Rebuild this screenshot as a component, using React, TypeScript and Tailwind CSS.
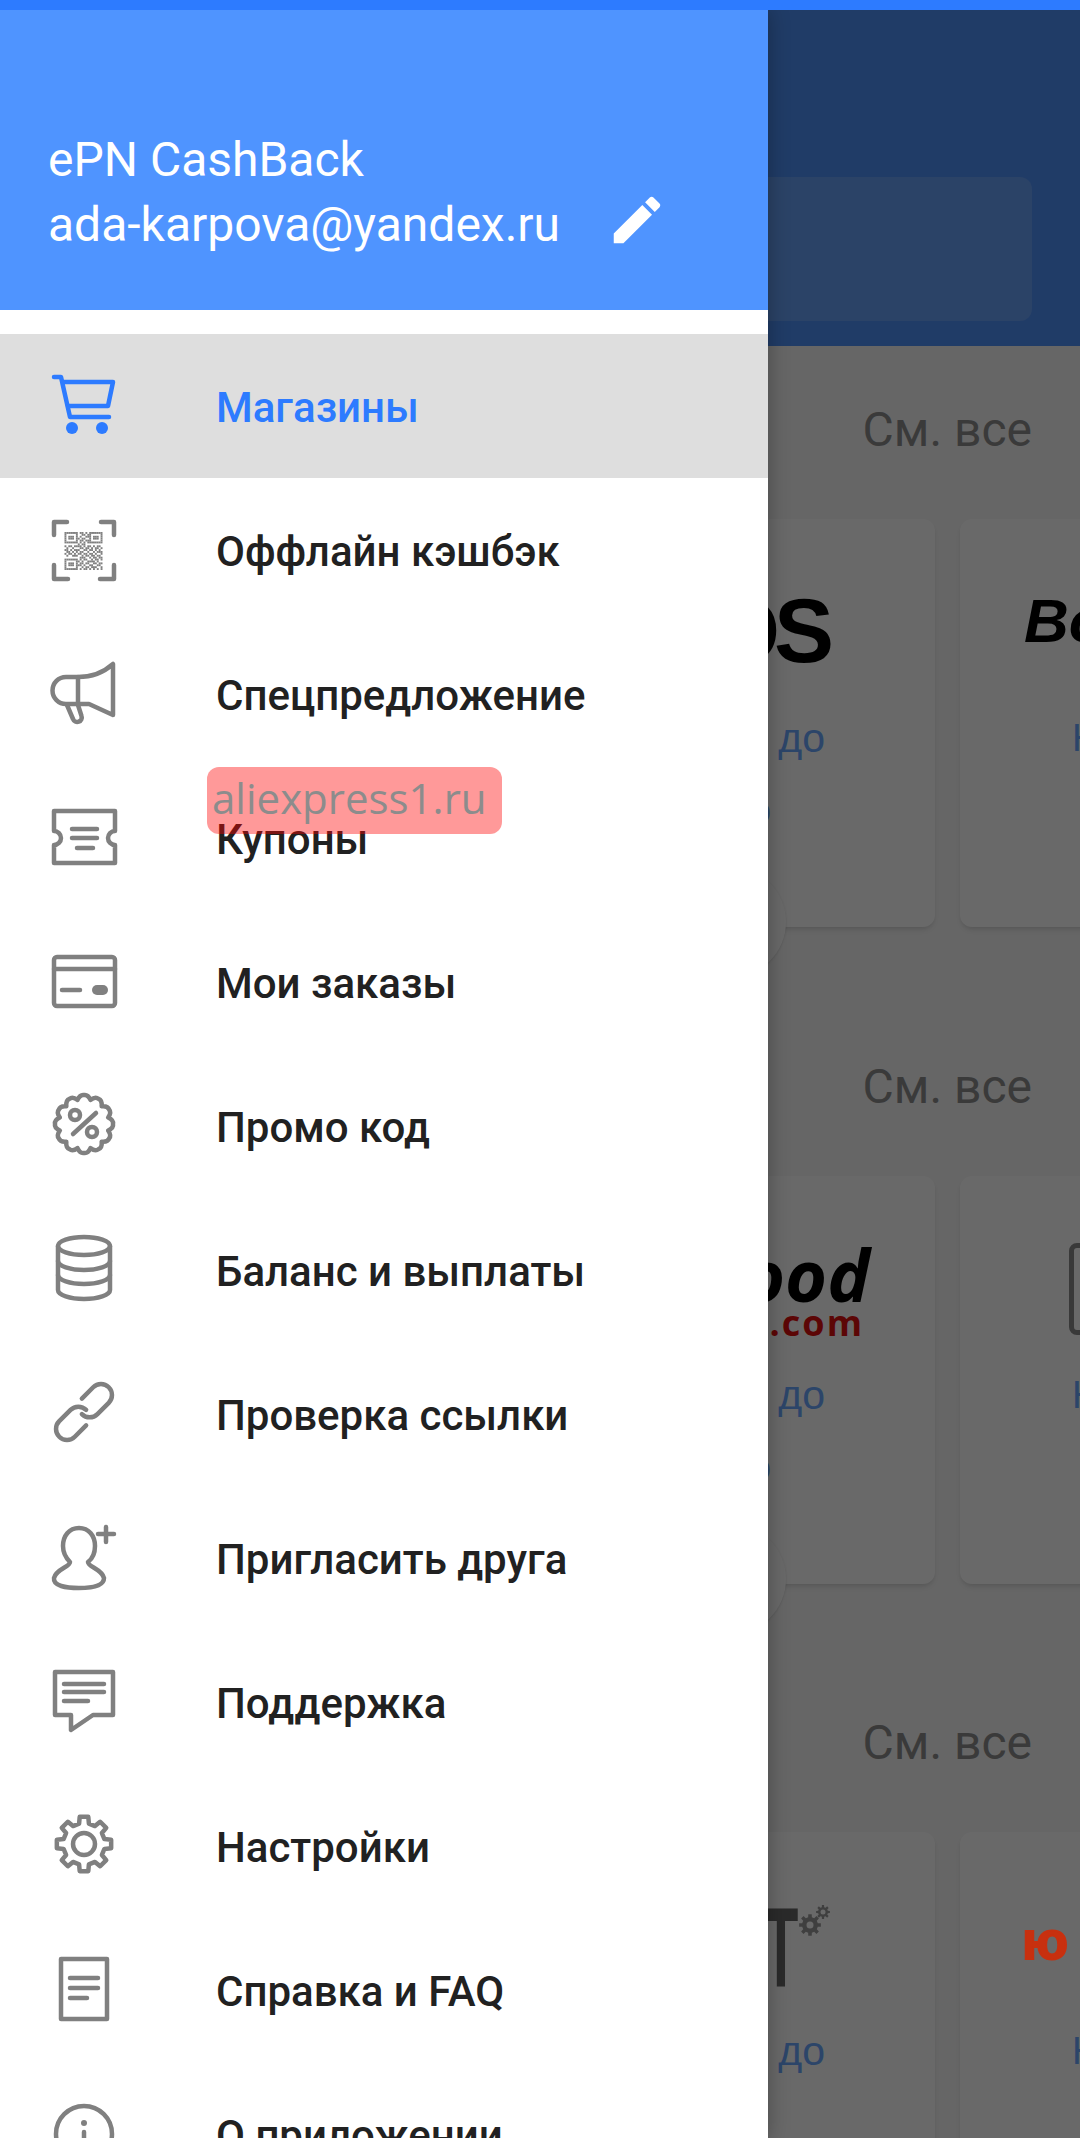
const MENU_GRAY = '#808080';

function badgePath(cx: number, cy: number, outer: number, inner: number, teeth: number) {
  // scalloped outline for the promo badge
  const pts: string[] = [];
  const step = (Math.PI * 2) / teeth;
  for (let i = 0; i < teeth; i++) {
    const a = i * step - Math.PI / 2;
    const b = a + step / 2;
    const c = a + step;
    const ctrl = (ang: number, r: number) => `${(cx + Math.cos(ang) * r).toFixed(2)} ${(cy + Math.sin(ang) * r).toFixed(2)}`;
    if (i === 0) pts.push(`M${ctrl(a, outer)}`);
    pts.push(`Q${ctrl(a + step * 0.25, outer + 1)} ${ctrl(b, inner)}`);
    pts.push(`Q${ctrl(b + step * 0.25, outer + 1)} ${ctrl(c, outer)}`);
  }
  return pts.join(' ') + 'Z';
}

function gearPath(cx: number, cy: number, outer: number, inner: number, teeth: number) {
  const pts: string[] = [];
  const step = (Math.PI * 2) / teeth;
  const at = (ang: number, r: number) => `${(cx + Math.cos(ang) * r).toFixed(2)} ${(cy + Math.sin(ang) * r).toFixed(2)}`;
  for (let i = 0; i < teeth; i++) {
    const a = i * step - Math.PI / 2;
    pts.push(`${i === 0 ? 'M' : 'L'}${at(a - step * 0.2, outer)}`);
    pts.push(`L${at(a + step * 0.2, outer)}`);
    pts.push(`L${at(a + step * 0.3, inner)}`);
    pts.push(`L${at(a + step * 0.7, inner)}`);
  }
  return pts.join(' ') + 'Z';
}

const QR = [
  '1111111011010 1111111',
  '1000001001101 1000001',
  '1011101010011 1011101',
  '1011101101100 1011101',
  '1000001011011 1000001',
  '1111111010101 1111111',
  '0000000101100 0000000',
  '1011011110101 1010110',
  '0100100011011 0101101',
  '1101011100110 1101010',
  '0110101011001 0010111',
  '1011010110110 1101001',
  '0100111001011 0110110',
  '0000000011100 1011011',
  '1111111010110 0101101',
  '1000001101001 1110100',
  '1011101011011 0011011',
  '1011101110100 1100110',
  '1000001001011 0111001',
  '1111111010110 1010101',
].map((r) => r.replace(' ', ''));

function Ic({ children, stroke = MENU_GRAY, sw = 4.5 }: { children: React.ReactNode; stroke?: string; sw?: number }) {
  return (
    <svg viewBox="0 0 64 64" className="w-16 h-16 flex-none overflow-visible" fill="none" stroke={stroke} strokeWidth={sw} strokeLinecap="round" strokeLinejoin="round">
      {children}
    </svg>
  );
}

const icons = {
  cart: (
    <Ic stroke="#2d7bff" sw={4.5}>
      <path d="M2 3h7l9 40h39" />
      <path d="M11 8h50l-5 24H16" />
      <circle cx="20" cy="54" r="6" fill="#2d7bff" stroke="none" />
      <circle cx="50" cy="54" r="6" fill="#2d7bff" stroke="none" />
    </Ic>
  ),
  qr: (
    <Ic sw={4.5}>
      <path d="M15 4H2v13M49 4h13v13M2 47v14h14M62 47v14H48" />
      <g fill={MENU_GRAY} stroke="none">
        {QR.flatMap((row, y) =>
          row.split('').map((c, x) => (c === '1' ? <rect key={`${x}-${y}`} x={12.5 + x * 1.9} y={14 + y * 1.9} width="1.9" height="1.9" /> : null)),
        )}
      </g>
    </Ic>
  ),
  megaphone: (
    <Ic>
      <path d="M61 2v51L37 42H14a13.5 13.5 0 0 1 0-27h12C40 15 51 11 61 2Z" />
      <path d="M26 15v27" />
      <path d="M15 43l6 14a4.5 4.5 0 0 0 8.5-3L26 43" />
    </Ic>
  ),
  ticket: (
    <Ic>
      <path d="M2 5h61v20a7 7 0 0 0 0 14v18H2V39a7 7 0 0 0 0-14Z" />
      <path d="M20 23h25M20 32h25M25 42h16" strokeWidth="4.5" />
    </Ic>
  ),
  card: (
    <Ic>
      <rect x="2" y="7" width="61" height="49" rx="3" />
      <path d="M2 19h61" />
      <path d="M10 40h18" />
      <rect x="40" y="35" width="16" height="10" rx="5" fill={MENU_GRAY} stroke="none" />
    </Ic>
  ),
  promo: (
    <Ic>
      <path d={badgePath(32, 30, 29, 25, 12)} />
      <path d="M21 40l23-21" />
      <circle cx="23" cy="21" r="5" />
      <circle cx="40" cy="38" r="5" />
    </Ic>
  ),
  database: (
    <Ic>
      <ellipse cx="32" cy="8" rx="26" ry="9" />
      <path d="M6 8v44c0 5 12 9 26 9s26-4 26-9V8" />
      <path d="M6 23c0 5 12 9 26 9s26-4 26-9" />
      <path d="M6 37c0 5 12 9 26 9s26-4 26-9" />
    </Ic>
  ),
  link: (
    <Ic>
      <g transform="rotate(-45 32 30)">
        <path d="M24 41H8a11 11 0 0 1 0-22h16a11 11 0 0 1 11 11" />
        <path d="M40 19h16a11 11 0 0 1 0 22H40a11 11 0 0 1-11-11" />
      </g>
    </Ic>
  ),
  invite: (
    <Ic>
      <path d="M27 2C17 2 11 10 11 20c0 8 4 13 7 16 0 5-14 7-16 16-1 8 12 10 25 10s25-2 25-10c-2-9-16-11-16-16 4-3 7-8 7-16C43 10 37 2 27 2Z" />
      <path d="M54 1v15M46 8h16" />
    </Ic>
  ),
  chat: (
    <Ic>
      <path d="M3 2h58v43H41L19 60V45H3Z" />
      <path d="M12 14h40M12 22h40M12 31h24" />
    </Ic>
  ),
  gear: (
    <Ic>
      <path d={gearPath(32, 30, 27.5, 21, 8)} />
      <circle cx="32" cy="30" r="11" />
    </Ic>
  ),
  doc: (
    <Ic>
      <rect x="9" y="1" width="46" height="60" />
      <path d="M18 20h28M18 30h28M18 40h17" strokeWidth="4.5" />
    </Ic>
  ),
  info: (
    <Ic>
      <circle cx="32" cy="32" r="28" />
      <circle cx="32" cy="21" r="3" fill={MENU_GRAY} stroke="none" />
      <path d="M32 30v18" />
    </Ic>
  ),
};

const menu: { label: string; icon: keyof typeof icons; active?: boolean }[] = [
  { label: 'Магазины', icon: 'cart', active: true },
  { label: 'Оффлайн кэшбэк', icon: 'qr' },
  { label: 'Спецпредложение', icon: 'megaphone' },
  { label: 'Купоны', icon: 'ticket' },
  { label: 'Мои заказы', icon: 'card' },
  { label: 'Промо код', icon: 'promo' },
  { label: 'Баланс и выплаты', icon: 'database' },
  { label: 'Проверка ссылки', icon: 'link' },
  { label: 'Пригласить друга', icon: 'invite' },
  { label: 'Поддержка', icon: 'chat' },
  { label: 'Настройки', icon: 'gear' },
  { label: 'Справка и FAQ', icon: 'doc' },
  { label: 'О приложении', icon: 'info' },
];

function LeftCard({ logo, badge }: { logo: React.ReactNode; badge?: boolean }) {
  return (
    <div className="relative w-[430px] h-[408px] flex-none rounded-xl bg-white shadow-md">
      <div className="h-[201px] flex flex-col justify-end">{logo}</div>
      <div className="pr-[110px] text-right font-['Liberation_Sans',sans-serif] text-[#6ba8ff]">
        <div className="text-[41px] leading-[36px]">Кэшбэк до</div>
        {badge && <div className="mt-[34px] pr-[54px] text-[41px] leading-[36px]">8%</div>}
      </div>
      {badge && <div className="absolute left-[171px] bottom-[-50px] w-[110px] h-[110px] rounded-full bg-white shadow-sm" />}
    </div>
  );
}

function RightCard({ logo }: { logo: React.ReactNode }) {
  return (
    <div className="w-[430px] h-[408px] flex-none rounded-xl bg-white shadow-md">
      <div className="h-[201px] flex flex-col justify-end">{logo}</div>
      <div className="pl-[112px] text-[38px] leading-[36px] text-[#6ba8ff] font-['Liberation_Sans',sans-serif]">Нет кэшбэка</div>
    </div>
  );
}

function Section({ children }: { children: React.ReactNode }) {
  return (
    <section className="h-[656.5px] pt-[56px] flex-none">
      <div className="h-[56px] pr-[48px] text-right text-[48px] leading-[56px] text-[#8e8e8e]">См. все</div>
      <div className="mt-[61px] pl-[505px] flex gap-[25px]">{children}</div>
    </section>
  );
}

export default function App() {
  return (
    <div className="relative w-[1080px] h-[2140px] overflow-hidden bg-[#f8f8f8] font-['Roboto',sans-serif]">
      {/* page behind the drawer */}
      <div className="flex flex-col h-full">
        <div className="h-[10px] flex-none" />
        <div className="h-[336px] flex-none pt-[167px] pl-[48px] pr-[48px] bg-[#4f92f9]">
          <div className="h-[144px] rounded-xl bg-white/15" />
        </div>
        <Section>
          <LeftCard
            badge
            logo={<div className="pr-[107px] text-right text-[90px] leading-[70px] tracking-[-6px] font-bold text-black font-['Liberation_Sans',sans-serif] mb-[54px]">ASOS</div>}
          />
          <RightCard logo={<div className="pl-[64px] text-[62px] leading-[66px] font-bold italic text-black font-['Liberation_Sans',sans-serif] mb-[66px] whitespace-nowrap">Bonprix</div>} />
        </Section>
        <Section>
          <LeftCard
            badge
            logo={
              <div className="pr-[65px] text-right font-bold italic font-['Open_Sans',sans-serif] mb-[33px]">
                <div className="text-[72px] leading-[56px] text-black">Banggood</div>
                <div className="pr-[6px] text-[36px] leading-[42px] tracking-[2px] not-italic text-[#e01010]">.com</div>
              </div>
            }
          />
          <RightCard logo={<div className="ml-[109px] mb-[42px] w-[100px] h-[92px] rounded-lg border-[5px] border-[#8a8a8a]" />} />
        </Section>
        <Section>
          <LeftCard
            logo={
              <div className="pr-[105px] flex justify-end items-start mb-[44px]">
                <div className="origin-right scale-x-50 text-[114px] leading-[84px] font-bold text-[#666666] font-['Liberation_Sans',sans-serif]">TEST</div>
                <svg viewBox="0 0 32 32" className="w-8 h-8 flex-none" fill="#9a9a9a">
                  <path d={gearPath(12, 20, 11, 8, 8)} />
                  <circle cx="12" cy="20" r="3.5" fill="#ffffff" />
                  <path d={gearPath(25, 7, 7, 5, 8)} />
                  <circle cx="25" cy="7" r="2.5" fill="#ffffff" />
                </svg>
              </div>
            }
          />
          <RightCard
            logo={<div className="relative z-10 pl-[62px] mb-[73px] text-[54px] leading-[40px] font-bold text-[#c8300f] [-webkit-text-stroke:2px_#c8300f] font-['Liberation_Sans',sans-serif]">ю</div>}
          />
        </Section>
      </div>

      {/* scrim */}
      <div className="absolute inset-0 bg-black/[0.59]" />

      {/* drawer */}
      <aside className="absolute z-20 top-[10px] left-0 bottom-0 w-[768px] bg-white overflow-hidden shadow-[0_0_20px_rgba(0,0,0,0.3)]">
        <div className="h-[300px] bg-[#4f94ff] pt-[117px] pl-[48px] text-white text-[48px] leading-[65px]">
          <div>ePN CashBack</div>
          <div className="flex items-center">
            <span>ada-karpova@yandex.ru</span>
            <svg viewBox="0 0 24 24" className="ml-[46px] mt-[-10px] w-[62px] h-[62px] flex-none" fill="currentColor">
              <path d="M3 17.25V21h3.75L17.81 9.94l-3.75-3.75L3 17.25zM20.71 7.04c.39-.39.39-1.02 0-1.41l-2.34-2.34c-.39-.39-1.02-.39-1.41 0l-1.83 1.83 3.75 3.75 1.83-1.83z" />
            </svg>
          </div>
        </div>
        <nav className="pt-[24px]">
          {menu.map((item) => (
            <div key={item.label} className={`h-[144px] pl-[52px] flex items-center ${item.active ? 'bg-[#dedede]' : ''}`}>
              {icons[item.icon]}
              <span className={`ml-[100px] pt-[2px] text-[42px] font-medium ${item.active ? 'text-[#2d7bff]' : 'text-[#212121]'}`}>{item.label}</span>
            </div>
          ))}
        </nav>
      </aside>

      {/* status bar strip */}
      <div className="absolute z-30 top-0 left-0 right-0 h-[10px] bg-[#2d7bff]" />

      {/* watermark */}
      <div className="absolute z-30 left-[207px] top-[767px] w-[295px] h-[67px] rounded-xl bg-[#ff0000]/40 pl-[5px] text-[42px] leading-[62px] text-[#8c8c8c] font-['Open_Sans',sans-serif]">aliexpress1.ru</div>

      {/* light line at the very bottom of the capture */}
      <div className="absolute z-30 bottom-0 left-0 right-0 h-[2px] bg-white" />
    </div>
  );
}
